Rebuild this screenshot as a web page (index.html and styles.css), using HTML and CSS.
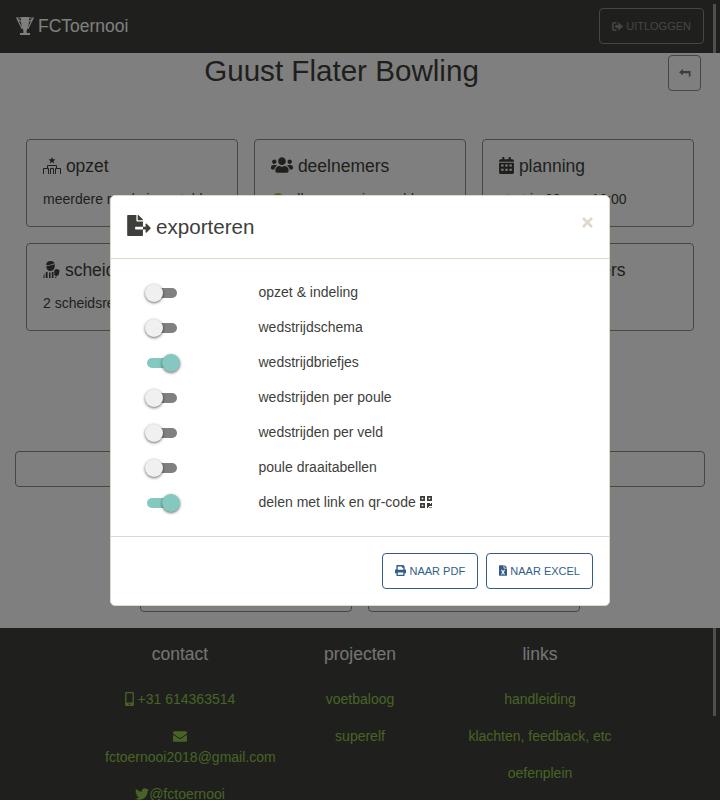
FILE: index.html
```html
<!DOCTYPE html>
<html lang="nl">
<head>
<meta charset="utf-8">
<title>FCToernooi</title>
<link rel="stylesheet" href="styles.css">
</head>
<body>
<svg class="defs" aria-hidden="true">
  <symbol id="trophy" viewBox="0 0 18 18"><path d="M5 0h8v3c0 5-1 8-2.300 10v3h3.300v2H4v-2h3.300v-3C6 11 5 8 5 3z"/><path d="M5 1H.8l5.500 11M13 1h4.200l-5.500 11M1 2l5 3M17 2l-5 3" fill="none" stroke="currentColor" stroke-width="1.200"/></symbol>
  <symbol id="signout" viewBox="0 0 11 11"><path d="M4.500 1.800H2.300Q.8 1.800.8 3.300v4.400q0 1.500 1.500 1.500h2.200" fill="none" stroke="currentColor" stroke-width="1.600"/><path d="M3.300 3.900h3V1.200L11 5.500 6.300 9.800V7.100h-3z"/></symbol>
  <symbol id="back" viewBox="0 0 12 8"><path d="M0 3.200L4 0v2h7.500v5.500H9.800V4.200H4v2z"/></symbol>
  <symbol id="structure" viewBox="0 0 18 17"><path d="M9 0l1 2.300 2.500.1-2 1.600.7 2.400L9 5 6.800 6.400 7.500 4l-2-1.600L8 2.300z"/><path d="M4.500 11V8.500h9V11M.5 17v-5.500h5V17M12.500 17v-5.500h5V17M7.500 17v-5.500h3V17" fill="none" stroke="currentColor"/></symbol>
  <symbol id="users" viewBox="0 0 640 512"><path d="M96 224c35.300 0 64-28.700 64-64s-28.700-64-64-64-64 28.700-64 64 28.700 64 64 64zm448 0c35.300 0 64-28.700 64-64s-28.700-64-64-64-64 28.700-64 64 28.700 64 64 64zm32 32h-64c-17.600 0-33.500 7.100-45.100 18.600 40.300 22.100 68.900 62 75.100 109.400h66c17.700 0 32-14.300 32-32v-32c0-35.300-28.700-64-64-64zm-256 0c61.900 0 112-50.100 112-112S381.900 32 320 32 208 82.100 208 144s50.100 112 112 112zm76.800 32h-8.300c-20.800 10-43.900 16-68.500 16s-47.600-6-68.500-16h-8.300C179.600 288 128 339.600 128 403.200V432c0 26.500 21.500 48 48 48h288c26.500 0 48-21.500 48-48v-28.800c0-63.600-51.600-115.200-115.200-115.200zm-223.700-13.400C161.500 263.100 145.600 256 128 256H64c-35.300 0-64 28.700-64 64v32c0 17.700 14.300 32 32 32h65.900c6.300-47.400 34.900-87.300 75.200-109.400z"/></symbol>
  <symbol id="calendar" viewBox="0 0 448 512"><path fill-rule="evenodd" d="M0 144V112q0-48 48-48h48V12q0-12 12-12h40q12 0 12 12v52h128V12q0-12 12-12h40q12 0 12 12v52h48q48 0 48 48v32zM0 176h448v288q0 48-48 48H48q-48 0-48-48zM64 224v64h72v-64zM188 224v64h72v-64zM312 224v64h72v-64zM64 352v64h72v-64zM188 352v64h72v-64zM312 352v64h72v-64z"/></symbol>
  <symbol id="referee" viewBox="0 0 17 17"><path d="M3 3.400Q4 0 7.500 0q3 0 4.300 2.200L4.600 4.400zM3.200 5.400l8.600-2.200q.6 6.300-4.400 6.800-3.800-.4-4.200-4.600zM.3 17q0-3 1.200-4.500V17zM2.700 11.600l1.900-.8V17H2.700zM6 11.500h1.500V17H6zM8.800 11h1.700v6H8.800zM11.300 9l2.500-.9L16.500 9l-.6 4.500-2.600 2-2-1.500zM12 15.700l2 1.300h-2z"/></symbol>
  <symbol id="export" viewBox="0 0 576 512"><path d="M384 121.900c0-6.300-2.500-12.400-7-16.900L279.100 7c-4.500-4.500-10.600-7-17-7H256v128h128zM571 308l-95.700-96.400c-10.100-10.100-27.400-3-27.400 11.300V288h-64v64h64v65.200c0 14.300 17.300 21.400 27.400 11.300L571 332c6.600-6.600 6.600-17.400 0-24zm-379 28v-32c0-8.800 7.200-16 16-16h176V160H248c-13.200 0-24-10.800-24-24V0H24C10.700 0 0 10.700 0 24v464c0 13.300 10.700 24 24 24h336c13.300 0 24-10.700 24-24V352H208c-8.800 0-16-7.200-16-16z"/></symbol>
  <symbol id="qr" viewBox="0 0 12 12"><path fill-rule="evenodd" d="M0 0h5v5H0zM1.700 1.700v1.600h1.600V1.700zM7 0h5v5H7zM8.700 1.700v1.600h1.600V1.700zM0 7h5v5H0zM1.700 8.700v1.600h1.600V8.700zM7 7h3v1h1V7h1v3H9v1H8v1H7z"/><path d="M9 11h3v1H9z" opacity=".6"/></symbol>
  <symbol id="print" viewBox="0 0 512 512"><path fill-rule="evenodd" d="M448 192V77c0-8-3-16-9-22L393 9c-6-6-14-9-22-9H96C78 0 64 14 64 32v160c-35 0-64 29-64 64v112c0 9 7 16 16 16h48v96c0 18 14 32 32 32h320c18 0 32-14 32-32v-96h48c9 0 16-7 16-16V256c0-35-29-64-64-64zm-64 256H128v-96h256zM384 224H128V64h192v48c0 9 7 16 16 16h48z"/></symbol>
  <symbol id="excel" viewBox="0 0 384 512"><path fill-rule="evenodd" d="M224 136V0H24C11 0 0 11 0 24v464c0 13 11 24 24 24h336c13 0 24-11 24-24V160H248c-13 0-24-11-24-24zm60 106l-60 94 60 94c5 8 0 18-10 18h-35c-5 0-9-2-11-6-22-40-36-68-36-68-9 20-14 27-36 68-2 4-6 6-11 6h-35c-9 0-15-10-10-18l60-94-60-94c-5-8 1-18 10-18h35c4 0 8 2 10 6 26 49 20 34 37 68 0 0 6-12 36-68 2-4 6-6 11-6h35c9 0 15 10 10 18zM384 122v6H256V0h6c6 0 12 3 17 7l98 98c4 5 7 11 7 17z"/></symbol>
  <symbol id="mobile" viewBox="0 0 320 512"><path fill-rule="evenodd" d="M272 0H48C21.500 0 0 21.500 0 48v416c0 26.500 21.500 48 48 48h224c26.500 0 48-21.500 48-48V48c0-26.500-21.500-48-48-48zM160 480c-17.700 0-32-14.300-32-32s14.300-32 32-32 32 14.300 32 32-14.300 32-32 32zm112-108c0 6.600-5.400 12-12 12H60c-6.600 0-12-5.400-12-12V60c0-6.600 5.400-12 12-12h200c6.600 0 12 5.400 12 12z"/></symbol>
  <symbol id="mail" viewBox="0 64 512 384"><path d="M502.300 190.800c3.900-3.100 9.700-.2 9.700 4.700V400c0 26.500-21.500 48-48 48H48c-26.500 0-48-21.500-48-48V195.600c0-5 5.700-7.800 9.700-4.700 22.400 17.400 52.100 39.500 154.100 113.600 21.100 15.400 56.700 47.800 92.200 47.600 35.700.3 72-32.800 92.300-47.600 102-74.100 131.600-96.300 154-113.700zM256 320c23.200.4 56.600-29.200 73.400-41.400 132.700-96.300 142.800-104.700 173.400-128.700 5.800-4.500 9.200-11.500 9.200-18.900v-19c0-26.500-21.500-48-48-48H48c-26.500 0-48 21.500-48 48v19c0 7.400 3.400 14.300 9.200 18.900 30.600 23.900 40.700 32.400 173.400 128.700 16.800 12.200 50.200 41.800 73.400 41.400z"/></symbol>
  <symbol id="twitter" viewBox="0 0 512 512"><path d="M459.400 151.700c.3 4.500.3 9.100.3 13.600 0 138.700-105.600 298.600-298.600 298.600-59.500 0-114.700-17.200-161.100-47.100 8.400 1 16.600 1.300 25.300 1.300 49.100 0 94.200-16.600 130.300-44.800-46.100-1-84.800-31.200-98.100-72.800 6.500 1 13 1.600 19.800 1.600 9.400 0 18.800-1.300 27.600-3.600-48.100-9.700-84.100-52-84.100-103v-1.300c14 7.800 30.200 12.700 47.400 13.300-28.300-18.800-46.800-51-46.800-87.400 0-19.500 5.200-37.400 14.300-53 51.700 63.700 129.300 105.300 216.400 109.800-1.600-7.800-2.600-15.900-2.600-24 0-57.800 46.800-104.900 104.900-104.900 30.200 0 57.500 12.700 76.700 33.100 23.700-4.500 46.500-13.300 66.600-25.300-7.800 24.400-24.400 44.800-46.100 57.800 21.100-2.300 41.600-8.100 60.400-16.200-14.300 20.800-32.200 39.300-52.600 54.300z"/></symbol>
</svg>
<div class="page">
  <nav class="navbar">
    <div class="brand"><svg width="18" height="18"><use href="#trophy"/></svg>FCToernooi</div>
    <button class="btn logout"><svg width="11" height="11"><use href="#signout"/></svg>UITLOGGEN</button>
  </nav>
  <main>
    <header class="title"><h1>Guust Flater Bowling</h1><button class="btn back"><svg width="12" height="8"><use href="#back"/></svg></button></header>
    <div class="cards">
      <section class="card"><h2><svg width="18" height="17"><use href="#structure"/></svg>opzet</h2><p>meerdere ronde ingesteld</p></section>
      <section class="card"><h2><svg class="users" width="22" height="18"><use href="#users"/></svg>deelnemers</h2><p><i class="dot"></i>alle namen ingevuld</p></section>
      <section class="card"><h2><svg width="15" height="17"><use href="#calendar"/></svg>planning</h2><p>start in 20 aug 10:00</p></section>
      <section class="card"><h2><svg width="17" height="17"><use href="#referee"/></svg>scheidsrechters</h2><p>2 scheidsrechters</p></section>
      <section class="card"></section>
      <section class="card admins"><h2><svg class="users" width="22" height="18"><use href="#users"/></svg>beheerders</h2></section>
    </div>
    <div class="strip"></div>
    <div class="lower"><div></div><div></div></div>
  </main>
  <footer>
    <div class="col"><h3>contact</h3><a><svg width="9" height="14"><use href="#mobile"/></svg> +31 614363514</a><a><svg class="mail" width="14" height="11"><use href="#mail"/></svg><br>fctoernooi2018@gmail.com</a><a><svg width="14" height="14"><use href="#twitter"/></svg>@fctoernooi</a></div>
    <div class="col"><h3>projecten</h3><a>voetbaloog</a><a>superelf</a></div>
    <div class="col"><h3>links</h3><a>handleiding</a><a>klachten, feedback, etc</a><a>oefenplein</a></div>
  </footer>
</div>
<div class="backdrop"></div>
<div class="scrollbar"></div>
<div class="modal" role="dialog">
  <div class="modal-head"><h4><svg width="24" height="21"><use href="#export"/></svg>exporteren</h4><svg class="close" width="11" height="11" viewBox="0 0 11 11"><path d="M1 1l9 9M10 1L1 10" stroke="currentColor" stroke-width="2.500"/></svg></div>
  <div class="modal-body">
    <div class="row"><span class="switch"></span><label>opzet &amp; indeling</label></div>
    <div class="row"><span class="switch"></span><label>wedstrijdschema</label></div>
    <div class="row"><span class="switch on"></span><label>wedstrijdbriefjes</label></div>
    <div class="row"><span class="switch"></span><label>wedstrijden per poule</label></div>
    <div class="row"><span class="switch"></span><label>wedstrijden per veld</label></div>
    <div class="row"><span class="switch"></span><label>poule draaitabellen</label></div>
    <div class="row"><span class="switch on"></span><label>delen met link en qr-code <svg width="12" height="12"><use href="#qr"/></svg></label></div>
  </div>
  <div class="modal-foot"><button class="btn primary pdf"><svg width="11" height="11"><use href="#print"/></svg>NAAR PDF</button><button class="btn primary"><svg width="8" height="11"><use href="#excel"/></svg>NAAR EXCEL</button></div>
</div>
</body>
</html>
```

FILE: styles.css
```css
* { box-sizing: border-box; }
body { margin: 0; height: 800px; overflow: hidden; background: #fff; color: #3e3f3a; font: 14px/21px "Liberation Sans", Arial, sans-serif; }
svg { fill: currentColor; flex: none; }
.defs { position: absolute; width: 0; height: 0; }
h1, h2, h3, h4, p { margin: 0; font-weight: 400; }
.page { height: 800px; overflow: hidden; }
.navbar { height: 53px; padding: 0 16px 1px; display: flex; align-items: center; justify-content: space-between; background: #3e3f3a; color: #fff; }
.brand { display: flex; align-items: center; gap: 4px; font-size: 17.5px; line-height: 26px; }
.btn { display: flex; align-items: center; justify-content: center; gap: 3px; height: 36px; padding: 0 12px; border: 1px solid #8e8c84; border-radius: 4px; background: transparent; color: #8e8c84; font: 11px/16px "Liberation Sans", Arial, sans-serif; }
.title { height: 86px; padding: 2px 19px 0 15px; display: flex; align-items: flex-start; }
.title h1 { flex: 1; text-align: center; font-size: 29.6px; line-height: 32px; }
.back { width: 33px; padding: 0; color: #7a786f; }
.cards { padding: 0 26px; display: grid; grid-template-columns: repeat(3, 212px); gap: 16px; }
.card { height: 88px; padding: 16px; border: 1px solid #8e8c84; border-radius: 4px; overflow: hidden; white-space: nowrap; }
.card h2 { display: flex; align-items: center; gap: 4.9px; height: 21px; font-size: 17.5px; line-height: 21px; }
.card h2 svg { margin-top: -2px; }
.card h2 .users { margin-top: -3px; }
.admins h2 { gap: 16px; }
.card p { margin-top: 12px; }
.dot { display: inline-block; width: 12px; height: 12px; margin: 0 5.5px -1px 1px; border-radius: 50%; background: #93c54b; }
.strip { height: 36px; margin: 120px 15px 0; border: 1px solid #8e8c84; border-radius: 4px; }
.lower { margin: 37px 140px 16px; display: grid; grid-template-columns: 1fr 1fr; gap: 16px; }
.lower div { height: 88px; border: 1px solid #8e8c84; border-radius: 4px; }
footer { height: 172px; padding: 16px 90px 0; display: grid; grid-template-columns: repeat(3, 180px); background: #3e3f3a; color: #dfd7ca; text-align: center; }
.col { padding: 0 15px; }
.col h3 { margin-bottom: 24px; color: #e8e8e6; font-size: 17.5px; line-height: 21px; }
.col a { display: block; margin-bottom: 16px; color: #93c54b; white-space: nowrap; }
.col svg { vertical-align: -2px; }
.col .mail { vertical-align: -1px; }
.backdrop { position: fixed; inset: 0; background: rgba(0,0,0,.5); }
.scrollbar { position: fixed; left: 713px; top: 4px; width: 3px; height: 712px; background: rgba(128,128,128,.5); }
.modal { position: fixed; left: 110px; top: 195px; width: 500px; height: 411px; background: #fff; border: 1px solid #dfd7ca; border-radius: 5px; }
.modal-head { height: 63px; padding: 16px; display: flex; justify-content: space-between; border-bottom: 1px solid #dfd7ca; }
.modal-head h4 { display: flex; align-items: center; gap: 5px; height: 30px; font-size: 20.6px; line-height: 30px; }
.modal-head h4 svg { margin-top: -4px; }
.close { margin: 5px 0 0; color: #dfd7ca; }
.modal-body { height: 278px; padding: 16px 32px; border-bottom: 1px solid #dfd7ca; }
.row { display: grid; grid-template-columns: 115.500px 1fr; height: 35px; align-items: center; }
.row label svg { vertical-align: -1px; }
.switch { position: relative; width: 30px; height: 10px; margin: 1px 0 0 4px; border-radius: 5px; background: #808080; }
.switch::after { content: ""; position: absolute; left: -2px; top: -4px; width: 18px; height: 18px; border-radius: 50%; background: #f0f0f0; box-shadow: 0 1px 3px rgba(0,0,0,.6); }
.switch.on { background: #84c8c0; }
.switch.on::after { left: 15px; background: #84c8c0; }
.modal-foot { padding: 16px; display: flex; justify-content: flex-end; gap: 8px; }
.primary { border-color: #325d88; color: #325d88; }
.primary svg { margin-top: -1px; }
.pdf { width: 96px; }
```
